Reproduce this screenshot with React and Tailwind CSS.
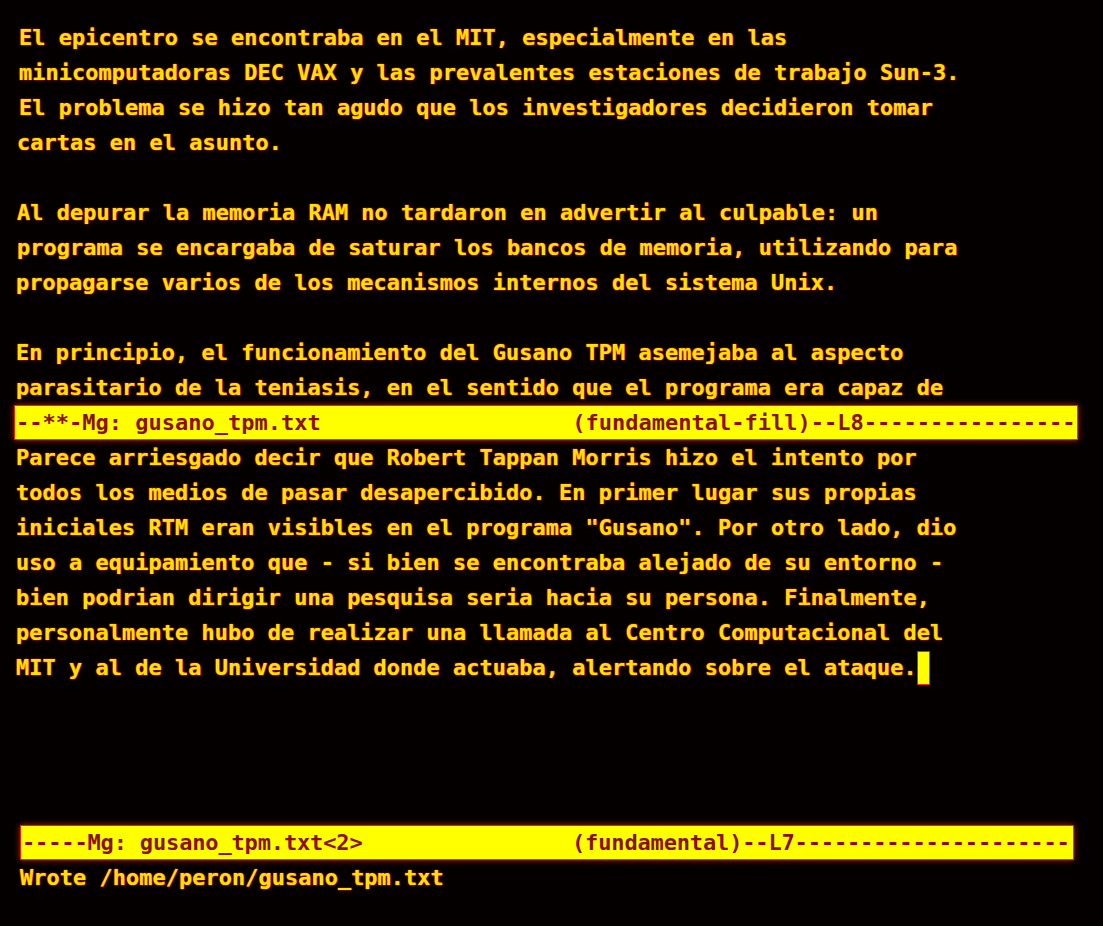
const text = [
  "El epicentro se encontraba en el MIT, especialmente en las",
  "minicomputadoras DEC VAX y las prevalentes estaciones de trabajo Sun-3.",
  "El problema se hizo tan agudo que los investigadores decidieron tomar",
  "cartas en el asunto.",
  "",
  "Al depurar la memoria RAM no tardaron en advertir al culpable: un",
  "programa se encargaba de saturar los bancos de memoria, utilizando para",
  "propagarse varios de los mecanismos internos del sistema Unix.",
  "",
  "En principio, el funcionamiento del Gusano TPM asemejaba al aspecto",
  "parasitario de la teniasis, en el sentido que el programa era capaz de",
];

const lower = [
  "Parece arriesgado decir que Robert Tappan Morris hizo el intento por",
  "todos los medios de pasar desapercibido. En primer lugar sus propias",
  'iniciales RTM eran visibles en el programa "Gusano". Por otro lado, dio',
  "uso a equipamiento que - si bien se encontraba alejado de su entorno -",
  "bien podrian dirigir una pesquisa seria hacia su persona. Finalmente,",
  "personalmente hubo de realizar una llamada al Centro Computacional del",
];

const modeLine = (left, right) => {
  const l = left.padEnd(42, " ");
  return (l + right).padEnd(80, "-");
};

const Row = ({ children, className = "" }) => (
  <div className={`h-[35px] leading-[35px] whitespace-pre ${className}`}>{children}</div>
);

const ModeLine = ({ left, right, className = "" }) => (
  <div
    className={`h-[35px] leading-[33px] whitespace-pre bg-[#ffff00] border border-[#e02a00] text-[#8a1000] [text-shadow:none] pl-[1px] shadow-[0_0_6px_#c02000] ${className}`}
  >
    {modeLine(left, right)}
  </div>
);

export default function App() {
  return (
    <div
      className="w-[1103px] h-[926px] overflow-hidden bg-[#040000] pt-[20px] pl-[16px] text-[22px] font-bold text-[#ffe100] [text-shadow:0_0_1px_#ff2a00,0_0_2px_#e02000]"
      style={{ fontFamily: '"DejaVu Sans Mono", "Liberation Mono", monospace' }}
    >
      {text.map((t, i) => (
        <Row key={i} className={i < 3 ? "pl-[3px]" : i < 7 ? "pl-[1px]" : ""}>
          {t}
        </Row>
      ))}
      <ModeLine left="--**-Mg: gusano_tpm.txt" right="(fundamental-fill)--L8" className="-ml-[2px] w-[1064px]" />
      {lower.map((t, i) => (
        <Row key={i}>{t}</Row>
      ))}
      <div className="h-[35px] leading-[35px] whitespace-pre flex items-center">
        <span>MIT y al de la Universidad donde actuaba, alertando sobre el ataque.</span>
        <span className="inline-block w-[13px] h-[34px] bg-[#ffff00] border border-[#e02a00]"></span>
      </div>
      <Row> </Row>
      <Row> </Row>
      <Row> </Row>
      <Row> </Row>
      <ModeLine
        left="-----Mg: gusano_tpm.txt<2>"
        right="(fundamental)--L7"
        className="ml-[4px] w-[1054px] tracking-[-0.15px]"
      />
      <Row className="pl-[4px]">Wrote /home/peron/gusano_tpm.txt</Row>
    </div>
  );
}
